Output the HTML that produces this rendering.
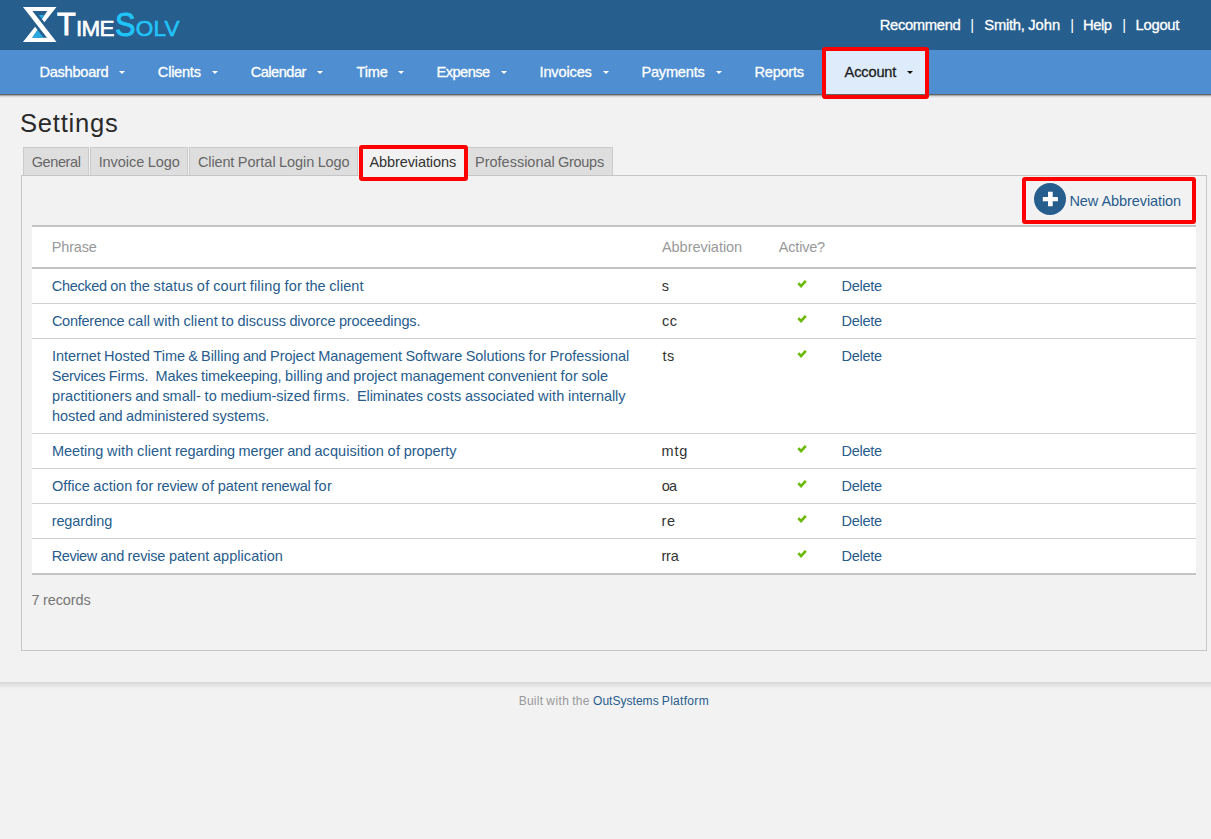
<!DOCTYPE html>
<html>
<head>
<meta charset="utf-8">
<title>Settings</title>
<style>
*{box-sizing:border-box;margin:0;padding:0}
html,body{width:1211px;height:839px;overflow:hidden}
body{background:#f2f2f2;font-family:"Liberation Sans",sans-serif;font-size:14px;color:#333;position:relative}
.a{position:absolute}
.t{position:absolute;white-space:nowrap}
.car{position:absolute;top:71px;width:0;height:0;border-left:3px solid transparent;border-right:3px solid transparent;border-top:3px solid #fff}
.tab{position:absolute;top:147px;height:29px;background:#dedede;border:1px solid #cbcbcb;border-bottom:none}
.ln{position:absolute;left:32px;width:1164px;background:#d0d0d0;height:1px}
.ln2{position:absolute;left:32px;width:1164px;background:#c4c4c4;height:2px}
.red{position:absolute;border:4px solid #fe0000;border-radius:3px}
.ck{position:absolute;left:796px;width:12px;height:12px}
</style>
</head>
<body>
<div class="a" style="left:0;top:0;width:1211px;height:50px;background:#265e8e"></div>
<div class="a" style="left:0;top:50px;width:1211px;height:44px;background:#4f8ed0"></div>
<div class="a" style="left:0;top:94px;width:1211px;height:1px;background:#636363"></div>
<div class="a" style="left:0;top:95px;width:1211px;height:1px;background:#a9a9a9"></div>
<div class="a" style="left:0;top:96px;width:1211px;height:1px;background:#d9d9d9"></div>
<div class="a" style="left:0;top:97px;width:1211px;height:1px;background:#ebebeb"></div>
<svg class="a" style="left:0;top:0" width="200" height="50" viewBox="0 0 200 50">
<path d="M22.97 6.97H56.5L44.4 22.2L41.9 18.9L47.25 11.1H32.4L56.5 41.93H22.97L35.06 26.7L37.56 30L32.2 37.8H47.06Z" fill="#fff"/>
<path d="M38.8 15.07H44.5L41.9 18.9Z" fill="#29abe2"/>
<path d="M32.2 37.8H43.66L37.56 30Z" fill="#29abe2"/>
</svg>
<div class="a" style="left:826px;top:51px;width:99px;height:43px;background:#ddebfb"></div>
<div class="red" style="left:822px;top:47px;width:107px;height:52px"></div>

<div class="car" style="left:119px;border-top-color:#fff"></div>
<div class="car" style="left:212px;border-top-color:#fff"></div>
<div class="car" style="left:317px;border-top-color:#fff"></div>
<div class="car" style="left:398px;border-top-color:#fff"></div>
<div class="car" style="left:501px;border-top-color:#fff"></div>
<div class="car" style="left:603px;border-top-color:#fff"></div>
<div class="car" style="left:716px;border-top-color:#fff"></div>
<div class="car" style="left:907px;border-top-color:#111"></div>

<div class="tab" style="left:23px;width:66px"></div>
<div class="tab" style="left:90px;width:98px"></div>
<div class="tab" style="left:189px;width:169px"></div>
<div class="tab" style="left:467px;width:146px"></div>
<div class="a" style="left:21px;top:175px;width:1186px;height:476px;border:1px solid #c6c6c6"></div>
<div class="a" style="left:363px;top:149px;width:101px;height:28px;background:#f2f2f2"></div>
<div class="red" style="left:359px;top:145px;width:109px;height:36px"></div>
<div class="red" style="left:1022px;top:177px;width:174px;height:47px"></div>
<svg class="a" style="left:1034px;top:183px" width="32" height="32" viewBox="0 0 32 32"><circle cx="16" cy="16" r="16" fill="#265e8e"/><path d="M14 8.8h4.7v5.3h5.2v4.2h-5.2v5h-4.7v-5H8.8v-4.2H14z" fill="#fff"/></svg>
<div class="a" style="left:32px;top:225px;width:1164px;height:350px;background:#fff"></div>
<div class="ln2" style="top:225px"></div>
<div class="ln2" style="top:267px"></div>
<div class="ln" style="top:303px"></div>
<div class="ln" style="top:338px"></div>
<div class="ln" style="top:433px"></div>
<div class="ln" style="top:468px"></div>
<div class="ln" style="top:503px"></div>
<div class="ln" style="top:538px"></div>
<div class="ln2" style="top:573px"></div>

<svg class="ck" style="top:277px" viewBox="0 0 12 12"><path d="M2.35 6.1L5.05 9.1L9.8 3.8" fill="none" stroke="#69b900" stroke-width="2.7"/></svg>
<svg class="ck" style="top:312px" viewBox="0 0 12 12"><path d="M2.35 6.1L5.05 9.1L9.8 3.8" fill="none" stroke="#69b900" stroke-width="2.7"/></svg>
<svg class="ck" style="top:347px" viewBox="0 0 12 12"><path d="M2.35 6.1L5.05 9.1L9.8 3.8" fill="none" stroke="#69b900" stroke-width="2.7"/></svg>
<svg class="ck" style="top:442px" viewBox="0 0 12 12"><path d="M2.35 6.1L5.05 9.1L9.8 3.8" fill="none" stroke="#69b900" stroke-width="2.7"/></svg>
<svg class="ck" style="top:477px" viewBox="0 0 12 12"><path d="M2.35 6.1L5.05 9.1L9.8 3.8" fill="none" stroke="#69b900" stroke-width="2.7"/></svg>
<svg class="ck" style="top:512px" viewBox="0 0 12 12"><path d="M2.35 6.1L5.05 9.1L9.8 3.8" fill="none" stroke="#69b900" stroke-width="2.7"/></svg>
<svg class="ck" style="top:547px" viewBox="0 0 12 12"><path d="M2.35 6.1L5.05 9.1L9.8 3.8" fill="none" stroke="#69b900" stroke-width="2.7"/></svg>
<div class="t" id="t1" style="left:879.67px;top:16.8px;font-size:14.8px;line-height:17px;color:#fff;letter-spacing:-0.338px;-webkit-text-stroke:0.3px #fff">Recommend</div>
<div class="t" id="t2" style="left:970.36px;top:16.8px;font-size:14.8px;line-height:17px;color:#fff;letter-spacing:0.000px;">|</div>
<div class="t" style="left:984.37px;top:16.8px;font-size:14.8px;line-height:17px;color:#fff;letter-spacing:-0.297px;-webkit-text-stroke:0.3px #fff">Smith,</div>
<div class="t" style="left:1028.24px;top:16.8px;font-size:14.8px;line-height:17px;color:#fff;letter-spacing:-0.008px;-webkit-text-stroke:0.3px #fff">John</div>
<div class="t" id="t4" style="left:1070.30px;top:16.8px;font-size:14.8px;line-height:17px;color:#fff;letter-spacing:0.000px;">|</div>
<div class="t" id="t5" style="left:1083.03px;top:16.8px;font-size:14.8px;line-height:17px;color:#fff;letter-spacing:-0.497px;-webkit-text-stroke:0.3px #fff">Help</div>
<div class="t" id="t6" style="left:1122.36px;top:16.8px;font-size:14.8px;line-height:17px;color:#fff;letter-spacing:0.000px;">|</div>
<div class="t" id="t7" style="left:1135.53px;top:16.8px;font-size:14.8px;line-height:17px;color:#fff;letter-spacing:-0.276px;-webkit-text-stroke:0.3px #fff">Logout</div>
<div class="t" id="n0" style="left:39.42px;top:64px;font-size:14.6px;line-height:17px;color:#fff;letter-spacing:-0.263px;-webkit-text-stroke:0.3px #fff">Dashboard</div>
<div class="t" id="n1" style="left:157.86px;top:64px;font-size:14.6px;line-height:17px;color:#fff;letter-spacing:-0.256px;-webkit-text-stroke:0.3px #fff">Clients</div>
<div class="t" id="n2" style="left:250.66px;top:64px;font-size:14.6px;line-height:17px;color:#fff;letter-spacing:-0.496px;-webkit-text-stroke:0.3px #fff">Calendar</div>
<div class="t" id="n3" style="left:356.54px;top:64px;font-size:14.6px;line-height:17px;color:#fff;letter-spacing:-0.219px;-webkit-text-stroke:0.3px #fff">Time</div>
<div class="t" id="n4" style="left:436.61px;top:64px;font-size:14.6px;line-height:17px;color:#fff;letter-spacing:-0.550px;-webkit-text-stroke:0.3px #fff">Expense</div>
<div class="t" id="n5" style="left:539.53px;top:64px;font-size:14.6px;line-height:17px;color:#fff;letter-spacing:-0.163px;-webkit-text-stroke:0.3px #fff">Invoices</div>
<div class="t" id="n6" style="left:641.42px;top:64px;font-size:14.6px;line-height:17px;color:#fff;letter-spacing:-0.209px;-webkit-text-stroke:0.3px #fff">Payments</div>
<div class="t" id="n7" style="left:754.61px;top:64px;font-size:14.6px;line-height:17px;color:#fff;letter-spacing:-0.294px;-webkit-text-stroke:0.3px #fff">Reports</div>
<div class="t" id="n8" style="left:844.58px;top:64px;font-size:14.6px;line-height:17px;color:#1c1c1c;letter-spacing:-0.157px;-webkit-text-stroke:0.3px #1c1c1c">Account</div>
<div class="t" id="h1" style="left:19.88px;top:107.4px;font-size:25.6px;line-height:32px;color:#2a2a2a;letter-spacing:0.790px;">Settings</div>
<div class="t" id="tb0" style="left:31.70px;top:153px;font-size:14.5px;line-height:18px;color:#666;letter-spacing:-0.395px;">General</div>
<div class="t" style="left:98.64px;top:153px;font-size:14.5px;line-height:18px;color:#666;letter-spacing:-0.058px;">Invoice</div>
<div class="t" style="left:147.75px;top:153px;font-size:14.5px;line-height:18px;color:#666;letter-spacing:-0.032px;">Logo</div>
<div class="t" style="left:198.04px;top:153px;font-size:14.5px;line-height:18px;color:#666;letter-spacing:-0.144px;">Client</div>
<div class="t" style="left:237.84px;top:153px;font-size:14.5px;line-height:18px;color:#666;letter-spacing:-0.022px;">Portal</div>
<div class="t" style="left:279.09px;top:153px;font-size:14.5px;line-height:18px;color:#666;letter-spacing:-0.083px;">Login</div>
<div class="t" style="left:317.67px;top:153px;font-size:14.5px;line-height:18px;color:#666;letter-spacing:-0.097px;">Logo</div>
<div class="t" id="tb3" style="left:369.48px;top:153px;font-size:14.5px;line-height:18px;color:#333;letter-spacing:-0.096px;">Abbreviations</div>
<div class="t" style="left:475.09px;top:153px;font-size:14.5px;line-height:18px;color:#666;letter-spacing:-0.015px;">Professional</div>
<div class="t" style="left:558.09px;top:153px;font-size:14.5px;line-height:18px;color:#666;letter-spacing:-0.300px;">Groups</div>
<div class="t" style="left:1069.57px;top:191px;font-size:14.5px;line-height:20px;color:#275c8d;letter-spacing:-0.234px;">New</div>
<div class="t" style="left:1101.48px;top:191px;font-size:14.5px;line-height:20px;color:#275c8d;letter-spacing:-0.086px;">Abbreviation</div>
<div class="t" id="th0" style="left:51.77px;top:237px;font-size:14.5px;line-height:20px;color:#999;letter-spacing:-0.172px;">Phrase</div>
<div class="t" id="th1" style="left:661.95px;top:237px;font-size:14.5px;line-height:20px;color:#999;letter-spacing:-0.033px;">Abbreviation</div>
<div class="t" id="th2" style="left:778.80px;top:237px;font-size:14.5px;line-height:20px;color:#999;letter-spacing:-0.195px;">Active?</div>
<div class="t" style="left:51.83px;top:276px;font-size:14.5px;line-height:20px;color:#275c8d;letter-spacing:-0.336px;">Checked</div>
<div class="t" style="left:110.36px;top:276px;font-size:14.5px;line-height:20px;color:#275c8d;letter-spacing:-0.084px;">on</div>
<div class="t" style="left:129.88px;top:276px;font-size:14.5px;line-height:20px;color:#275c8d;letter-spacing:-0.047px;">the</div>
<div class="t" style="left:153.53px;top:276px;font-size:14.5px;line-height:20px;color:#275c8d;letter-spacing:0.150px;">status</div>
<div class="t" style="left:196.81px;top:276px;font-size:14.5px;line-height:20px;color:#275c8d;letter-spacing:0.483px;">of</div>
<div class="t" style="left:213.22px;top:276px;font-size:14.5px;line-height:20px;color:#275c8d;letter-spacing:0.128px;">court</div>
<div class="t" style="left:249.68px;top:276px;font-size:14.5px;line-height:20px;color:#275c8d;letter-spacing:0.220px;">filing</div>
<div class="t" style="left:284.40px;top:276px;font-size:14.5px;line-height:20px;color:#275c8d;letter-spacing:0.318px;">for</div>
<div class="t" style="left:305.62px;top:276px;font-size:14.5px;line-height:20px;color:#275c8d;letter-spacing:-0.047px;">the</div>
<div class="t" style="left:329.24px;top:276px;font-size:14.5px;line-height:20px;color:#275c8d;letter-spacing:0.091px;">client</div>
<div class="t" style="left:51.88px;top:311px;font-size:14.5px;line-height:20px;color:#275c8d;letter-spacing:-0.246px;">Conference</div>
<div class="t" style="left:128.04px;top:311px;font-size:14.5px;line-height:20px;color:#275c8d;letter-spacing:0.053px;">call</div>
<div class="t" style="left:153.58px;top:311px;font-size:14.5px;line-height:20px;color:#275c8d;letter-spacing:0.173px;">with</div>
<div class="t" style="left:183.52px;top:311px;font-size:14.5px;line-height:20px;color:#275c8d;letter-spacing:0.058px;">client</div>
<div class="t" style="left:221.35px;top:311px;font-size:14.5px;line-height:20px;color:#275c8d;letter-spacing:0.301px;">to</div>
<div class="t" style="left:237.41px;top:311px;font-size:14.5px;line-height:20px;color:#275c8d;letter-spacing:0.027px;">discuss</div>
<div class="t" style="left:289.40px;top:311px;font-size:14.5px;line-height:20px;color:#275c8d;letter-spacing:-0.101px;">divorce</div>
<div class="t" style="left:338.93px;top:311px;font-size:14.5px;line-height:20px;color:#275c8d;letter-spacing:-0.136px;">proceedings.</div>
<div class="t" style="left:51.97px;top:346px;font-size:14.5px;line-height:20px;color:#275c8d;letter-spacing:-0.068px;">Internet</div>
<div class="t" style="left:104.12px;top:346px;font-size:14.5px;line-height:20px;color:#275c8d;letter-spacing:-0.043px;">Hosted</div>
<div class="t" style="left:153.37px;top:346px;font-size:14.5px;line-height:20px;color:#275c8d;letter-spacing:0.045px;">Time</div>
<div class="t" style="left:188.31px;top:346px;font-size:14.5px;line-height:20px;color:#275c8d;letter-spacing:-0.851px;">&amp;</div>
<div class="t" style="left:201.05px;top:346px;font-size:14.5px;line-height:20px;color:#275c8d;letter-spacing:-0.041px;">Billing</div>
<div class="t" style="left:242.88px;top:346px;font-size:14.5px;line-height:20px;color:#275c8d;letter-spacing:-0.216px;">and</div>
<div class="t" style="left:270.03px;top:346px;font-size:14.5px;line-height:20px;color:#275c8d;letter-spacing:-0.046px;">Project</div>
<div class="t" style="left:318.33px;top:346px;font-size:14.5px;line-height:20px;color:#275c8d;letter-spacing:-0.108px;">Management</div>
<div class="t" style="left:405.44px;top:346px;font-size:14.5px;line-height:20px;color:#275c8d;letter-spacing:-0.057px;">Software</div>
<div class="t" style="left:465.73px;top:346px;font-size:14.5px;line-height:20px;color:#275c8d;letter-spacing:-0.060px;">Solutions</div>
<div class="t" style="left:528.54px;top:346px;font-size:14.5px;line-height:20px;color:#275c8d;letter-spacing:0.300px;">for</div>
<div class="t" style="left:549.71px;top:346px;font-size:14.5px;line-height:20px;color:#275c8d;letter-spacing:-0.027px;">Professional</div>
<div class="t" style="left:51.86px;top:366px;font-size:14.5px;line-height:20px;color:#275c8d;letter-spacing:-0.281px;">Services</div>
<div class="t" style="left:108.82px;top:366px;font-size:14.5px;line-height:20px;color:#275c8d;letter-spacing:-0.109px;">Firms.</div>
<div class="t" style="left:155.46px;top:366px;font-size:14.5px;line-height:20px;color:#275c8d;letter-spacing:-0.110px;">Makes</div>
<div class="t" style="left:201.12px;top:366px;font-size:14.5px;line-height:20px;color:#275c8d;letter-spacing:-0.160px;">timekeeping,</div>
<div class="t" style="left:285.04px;top:366px;font-size:14.5px;line-height:20px;color:#275c8d;letter-spacing:0.065px;">billing</div>
<div class="t" style="left:325.97px;top:366px;font-size:14.5px;line-height:20px;color:#275c8d;letter-spacing:-0.212px;">and</div>
<div class="t" style="left:353.18px;top:366px;font-size:14.5px;line-height:20px;color:#275c8d;letter-spacing:0.046px;">project</div>
<div class="t" style="left:400.48px;top:366px;font-size:14.5px;line-height:20px;color:#275c8d;letter-spacing:-0.098px;">management</div>
<div class="t" style="left:487.64px;top:366px;font-size:14.5px;line-height:20px;color:#275c8d;letter-spacing:-0.110px;">convenient</div>
<div class="t" style="left:560.41px;top:366px;font-size:14.5px;line-height:20px;color:#275c8d;letter-spacing:0.304px;">for</div>
<div class="t" style="left:581.58px;top:366px;font-size:14.5px;line-height:20px;color:#275c8d;letter-spacing:-0.054px;">sole</div>
<div class="t" style="left:52.03px;top:386px;font-size:14.5px;line-height:20px;color:#275c8d;letter-spacing:0.064px;">practitioners</div>
<div class="t" style="left:135.23px;top:386px;font-size:14.5px;line-height:20px;color:#275c8d;letter-spacing:-0.200px;">and</div>
<div class="t" style="left:162.43px;top:386px;font-size:14.5px;line-height:20px;color:#275c8d;letter-spacing:-0.051px;">small-</div>
<div class="t" style="left:204.51px;top:386px;font-size:14.5px;line-height:20px;color:#275c8d;letter-spacing:0.332px;">to</div>
<div class="t" style="left:220.58px;top:386px;font-size:14.5px;line-height:20px;color:#275c8d;letter-spacing:-0.095px;">medium-sized</div>
<div class="t" style="left:313.36px;top:386px;font-size:14.5px;line-height:20px;color:#275c8d;letter-spacing:0.219px;">firms.</div>
<div class="t" style="left:357.00px;top:386px;font-size:14.5px;line-height:20px;color:#275c8d;letter-spacing:-0.088px;">Eliminates</div>
<div class="t" style="left:426.67px;top:386px;font-size:14.5px;line-height:20px;color:#275c8d;letter-spacing:0.208px;">costs</div>
<div class="t" style="left:464.97px;top:386px;font-size:14.5px;line-height:20px;color:#275c8d;letter-spacing:0.003px;">associated</div>
<div class="t" style="left:537.96px;top:386px;font-size:14.5px;line-height:20px;color:#275c8d;letter-spacing:0.205px;">with</div>
<div class="t" style="left:567.97px;top:386px;font-size:14.5px;line-height:20px;color:#275c8d;letter-spacing:-0.052px;">internally</div>
<div class="t" style="left:51.99px;top:406px;font-size:14.5px;line-height:20px;color:#275c8d;letter-spacing:-0.022px;">hosted</div>
<div class="t" style="left:98.82px;top:406px;font-size:14.5px;line-height:20px;color:#275c8d;letter-spacing:-0.212px;">and</div>
<div class="t" style="left:126.00px;top:406px;font-size:14.5px;line-height:20px;color:#275c8d;letter-spacing:-0.024px;">administered</div>
<div class="t" style="left:212.24px;top:406px;font-size:14.5px;line-height:20px;color:#275c8d;letter-spacing:-0.020px;">systems.</div>
<div class="t" style="left:51.99px;top:441px;font-size:14.5px;line-height:20px;color:#275c8d;letter-spacing:-0.027px;">Meeting</div>
<div class="t" style="left:107.03px;top:441px;font-size:14.5px;line-height:20px;color:#275c8d;letter-spacing:0.204px;">with</div>
<div class="t" style="left:137.10px;top:441px;font-size:14.5px;line-height:20px;color:#275c8d;letter-spacing:0.085px;">client</div>
<div class="t" style="left:174.89px;top:441px;font-size:14.5px;line-height:20px;color:#275c8d;letter-spacing:-0.122px;">regarding</div>
<div class="t" style="left:238.57px;top:441px;font-size:14.5px;line-height:20px;color:#275c8d;letter-spacing:-0.134px;">merger</div>
<div class="t" style="left:287.19px;top:441px;font-size:14.5px;line-height:20px;color:#275c8d;letter-spacing:-0.201px;">and</div>
<div class="t" style="left:314.45px;top:441px;font-size:14.5px;line-height:20px;color:#275c8d;letter-spacing:0.081px;">acquisition</div>
<div class="t" style="left:387.57px;top:441px;font-size:14.5px;line-height:20px;color:#275c8d;letter-spacing:0.477px;">of</div>
<div class="t" style="left:403.86px;top:441px;font-size:14.5px;line-height:20px;color:#275c8d;letter-spacing:-0.076px;">property</div>
<div class="t" style="left:52.02px;top:476px;font-size:14.5px;line-height:20px;color:#275c8d;letter-spacing:0.040px;">Office</div>
<div class="t" style="left:93.37px;top:476px;font-size:14.5px;line-height:20px;color:#275c8d;letter-spacing:0.048px;">action</div>
<div class="t" style="left:135.98px;top:476px;font-size:14.5px;line-height:20px;color:#275c8d;letter-spacing:0.276px;">for</div>
<div class="t" style="left:156.99px;top:476px;font-size:14.5px;line-height:20px;color:#275c8d;letter-spacing:-0.208px;">review</div>
<div class="t" style="left:201.46px;top:476px;font-size:14.5px;line-height:20px;color:#275c8d;letter-spacing:0.437px;">of</div>
<div class="t" style="left:217.70px;top:476px;font-size:14.5px;line-height:20px;color:#275c8d;letter-spacing:-0.031px;">patent</div>
<div class="t" style="left:261.25px;top:476px;font-size:14.5px;line-height:20px;color:#275c8d;letter-spacing:-0.212px;">renewal</div>
<div class="t" style="left:314.29px;top:476px;font-size:14.5px;line-height:20px;color:#275c8d;letter-spacing:0.276px;">for</div>
<div class="t" id="p8" style="left:51.65px;top:511px;font-size:14.5px;line-height:20px;color:#275c8d;letter-spacing:-0.086px;">regarding</div>
<div class="t" style="left:51.78px;top:546px;font-size:14.5px;line-height:20px;color:#275c8d;letter-spacing:-0.430px;">Review</div>
<div class="t" style="left:100.41px;top:546px;font-size:14.5px;line-height:20px;color:#275c8d;letter-spacing:-0.180px;">and</div>
<div class="t" style="left:127.60px;top:546px;font-size:14.5px;line-height:20px;color:#275c8d;letter-spacing:-0.172px;">revise</div>
<div class="t" style="left:168.89px;top:546px;font-size:14.5px;line-height:20px;color:#275c8d;letter-spacing:0.027px;">patent</div>
<div class="t" style="left:212.92px;top:546px;font-size:14.5px;line-height:20px;color:#275c8d;letter-spacing:0.062px;">application</div>
<div class="t" id="a0" style="left:661.81px;top:276px;font-size:14.5px;line-height:20px;color:#333;letter-spacing:0.000px;">s</div>
<div class="t" id="d0" style="left:841.55px;top:276px;font-size:14.5px;line-height:20px;color:#275c8d;letter-spacing:-0.288px;">Delete</div>
<div class="t" id="a1" style="left:661.96px;top:311px;font-size:14.5px;line-height:20px;color:#333;letter-spacing:0.446px;">cc</div>
<div class="t" id="d1" style="left:841.55px;top:311px;font-size:14.5px;line-height:20px;color:#275c8d;letter-spacing:-0.288px;">Delete</div>
<div class="t" id="a2" style="left:662.44px;top:346px;font-size:14.5px;line-height:20px;color:#333;letter-spacing:0.536px;">ts</div>
<div class="t" id="d2" style="left:841.55px;top:346px;font-size:14.5px;line-height:20px;color:#275c8d;letter-spacing:-0.288px;">Delete</div>
<div class="t" id="a3" style="left:661.53px;top:441px;font-size:14.5px;line-height:20px;color:#333;letter-spacing:0.800px;">mtg</div>
<div class="t" id="d3" style="left:841.55px;top:441px;font-size:14.5px;line-height:20px;color:#275c8d;letter-spacing:-0.288px;">Delete</div>
<div class="t" id="a4" style="left:661.83px;top:476px;font-size:14.5px;line-height:20px;color:#333;letter-spacing:-0.800px;">oa</div>
<div class="t" id="d4" style="left:841.55px;top:476px;font-size:14.5px;line-height:20px;color:#275c8d;letter-spacing:-0.288px;">Delete</div>
<div class="t" id="a5" style="left:661.52px;top:511px;font-size:14.5px;line-height:20px;color:#333;letter-spacing:0.616px;">re</div>
<div class="t" id="d5" style="left:841.55px;top:511px;font-size:14.5px;line-height:20px;color:#275c8d;letter-spacing:-0.288px;">Delete</div>
<div class="t" id="a6" style="left:661.52px;top:546px;font-size:14.5px;line-height:20px;color:#333;letter-spacing:-0.240px;">rra</div>
<div class="t" id="d6" style="left:841.55px;top:546px;font-size:14.5px;line-height:20px;color:#275c8d;letter-spacing:-0.288px;">Delete</div>
<div class="t" style="left:31.57px;top:590px;font-size:14.5px;line-height:20px;color:#777;letter-spacing:-0.164px;">7</div>
<div class="t" style="left:43.01px;top:590px;font-size:14.5px;line-height:20px;color:#777;letter-spacing:-0.102px;">records</div>
<div class="t" style="left:518.76px;top:693px;font-size:12px;line-height:16px;color:#999;letter-spacing:0.217px;">Built</div>
<div class="t" style="left:546.34px;top:693px;font-size:12px;line-height:16px;color:#999;letter-spacing:0.419px;">with</div>
<div class="t" style="left:572.30px;top:693px;font-size:12px;line-height:16px;color:#999;letter-spacing:0.207px;">the</div>
<div class="t" style="left:593.06px;top:693px;font-size:12px;line-height:16px;color:#275c8d;letter-spacing:0.026px;">OutSystems</div>
<div class="t" style="left:661.83px;top:693px;font-size:12px;line-height:16px;color:#275c8d;letter-spacing:0.305px;">Platform</div>
<div class="t" style="left:56.96px;top:9.16px;font-size:31px;line-height:31px;color:#fff;-webkit-text-stroke:0.9px #fff;letter-spacing:0px;transform-origin:0 0;transform:scaleX(0.99)">T</div>
<div class="t" style="left:75.93px;top:17.51px;font-size:22.5px;line-height:22.5px;color:#fff;-webkit-text-stroke:0.6px #fff;letter-spacing:-0.769px;transform-origin:0 0;transform:scaleX(1)">IME</div>
<div class="t" style="left:115px;top:7.96px;font-size:33px;line-height:33px;color:#20c4f8;-webkit-text-stroke:0.9px #20c4f8;letter-spacing:0px;transform-origin:0 0;transform:scaleX(0.93)">S</div>
<div class="t" style="left:135.83px;top:17.91px;font-size:22.5px;line-height:22.5px;color:#20c4f8;-webkit-text-stroke:0.6px #20c4f8;letter-spacing:0.202px;transform-origin:0 0;transform:scaleX(1)">OLV</div>

<div class="a" style="left:0;top:682px;width:1211px;height:7px;background:linear-gradient(#d6d6d6,#f2f2f2)"></div>
</body>
</html>
